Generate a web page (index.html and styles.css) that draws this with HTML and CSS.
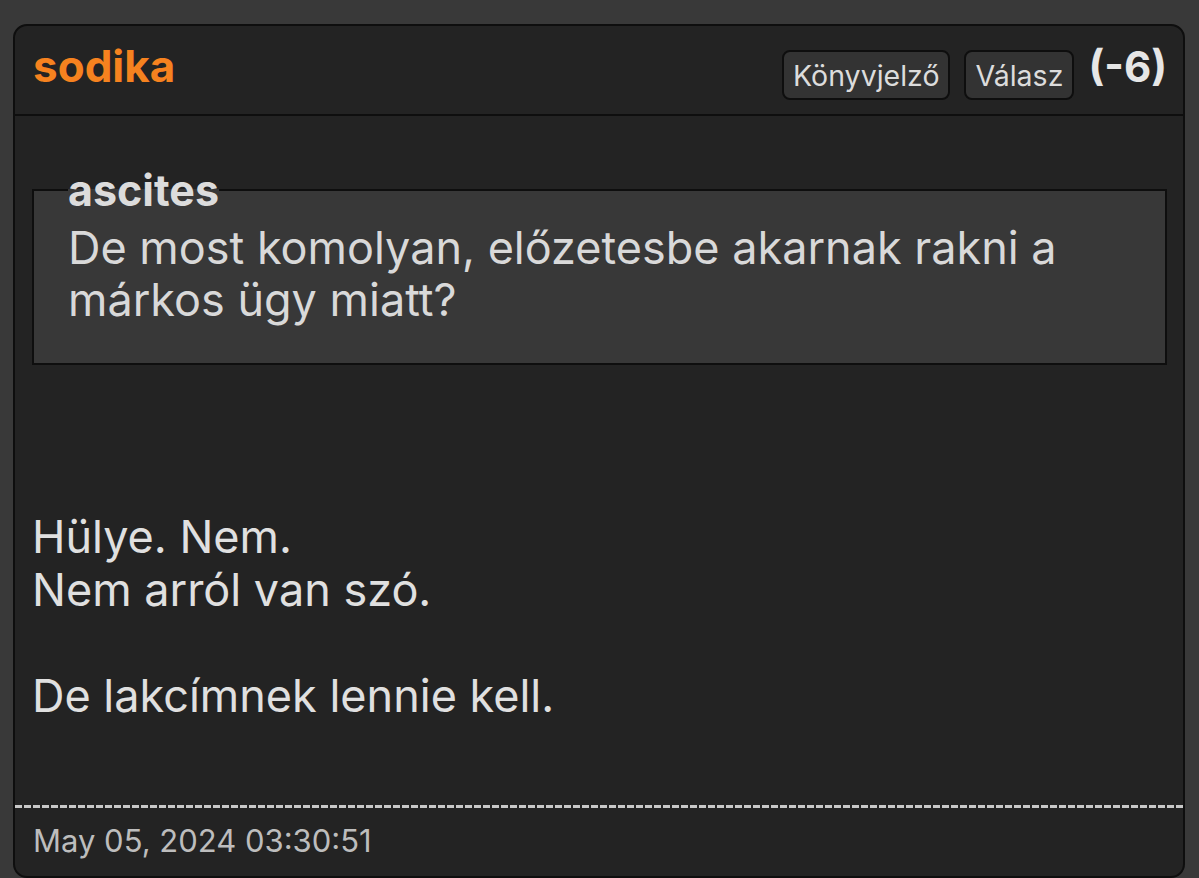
FILE: index.html
```html
<!DOCTYPE html>
<html lang="hu">
<head>
<meta charset="utf-8">
<title>sodika</title>
<link rel="stylesheet" href="styles.css">
</head>
<body>
<article class="card">
  <header class="card-head">
    <span class="author">sodika</span>
    <div class="actions">
      <button class="btn">Könyvjelző</button>
      <button class="btn">Válasz</button>
      <span class="score">(-6)</span>
    </div>
  </header>
  <div class="card-body">
    <fieldset class="quote">
      <legend class="quote-author">ascites</legend>
      <p class="quote-text">De most komolyan, előzetesbe akarnak rakni a márkos ügy miatt?</p>
    </fieldset>
    <p class="message">Hülye. Nem.<br>Nem arról van szó.<br><br>De lakcímnek lennie kell.</p>
  </div>
  <div class="dash"></div>
  <footer class="card-foot">May 05, 2024 03:30:51</footer>
</article>
</body>
</html>
```
FILE: styles.css
```css
html, body {
  margin: 0;
  padding: 0;
  background: #393939;
  font-family: Inter, "Noto Sans", sans-serif;
}
body {
  padding: 24px 14px 0 13px;
  height: 878px;
  box-sizing: border-box;
  overflow: hidden;
}
.card {
  background: #232323;
  border: 2px solid #0e0e0e;
  border-radius: 14px;
  height: 854px;
  box-sizing: border-box;
  display: flex;
  flex-direction: column;
}
.card-head {
  height: 88px;
  border-bottom: 2px solid #0e0e0e;
  display: flex;
  align-items: center;
  justify-content: space-between;
  padding: 0 16px 0 18px;
}
.author {
  color: #f6821f;
  font-weight: 700;
  font-size: 44px;
  margin-top: -8px;
}
.actions {
  display: flex;
  align-items: center;
  gap: 14px;
}
.btn {
  font-family: inherit;
  background: #333333;
  color: #dcdcdc;
  border: 2px solid #0e0e0e;
  border-radius: 8px;
  height: 50px;
  padding: 0 9px;
  font-size: 28.5px;
  margin-top: 10px;
}
.score {
  color: #e6e6e6;
  font-weight: 700;
  font-size: 42px;
  margin-top: -8px;
}
.card-body {
  padding: 0 16px 0 17px;
  flex: 1;
}
.quote {
  margin: 52px 0 0 0;
  background: #383838;
  border: 2px solid #0e0e0e;
  padding: 10px 34px 37px 34px;
}
.quote-author {
  padding: 0;
  margin-left: 0;
  color: #dcdcdc;
  font-weight: 700;
  font-size: 43px;
  line-height: 44px;
}
.quote-text {
  margin: 0;
  color: #d9d9d9;
  font-size: 45px;
  line-height: 52px;
}
.message {
  margin: 145px 0 0 0;
  color: #e0e0e0;
  font-size: 45px;
  line-height: 53px;
}
.dash {
  height: 3px;
  background: repeating-linear-gradient(to right, #c8c8c8 0 7px, transparent 7px 9px);
}
.card-foot {
  height: 68px;
  display: flex;
  align-items: center;
  padding: 0 18px 4px;
  box-sizing: border-box;
  color: #bdbdbd;
  font-size: 31px;
}
```
